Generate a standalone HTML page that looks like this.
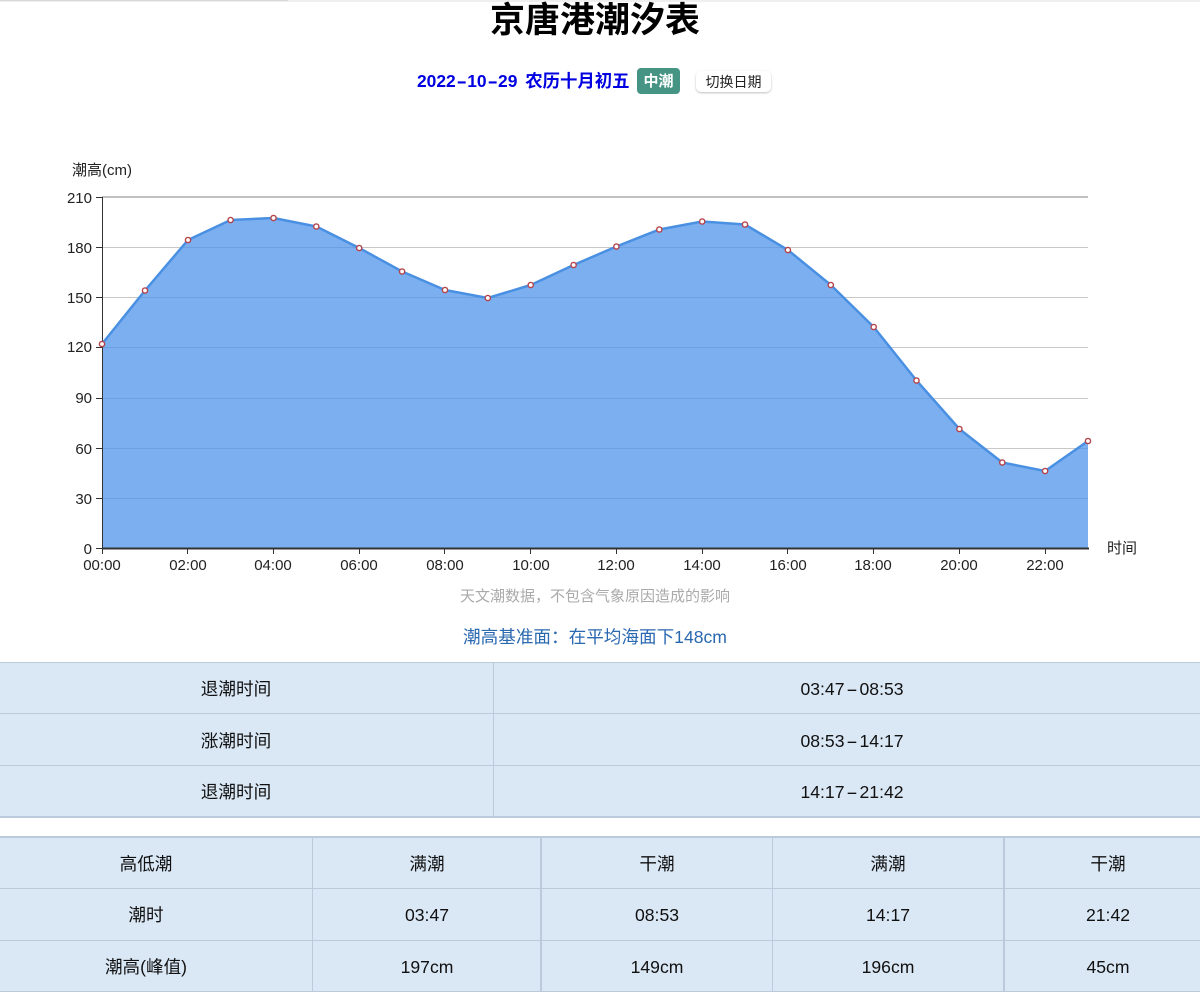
<!DOCTYPE html>
<html lang="zh-CN">
<head>
<meta charset="utf-8">
<title>京唐港潮汐表</title>
<style>
html,body{margin:0;padding:0;background:#fff;width:1200px;height:996px;overflow:hidden;font-family:"Liberation Sans","Noto Sans CJK SC",sans-serif;color:#111}
.abs{position:absolute;white-space:nowrap}
.c{transform:translateX(-50%);text-align:center}
#wrap{position:relative;width:1200px;height:996px;overflow:hidden}
.bg{position:absolute;left:0;width:1200px;background:#dae7f5}
.h{position:absolute;left:0;width:1200px;background:#bccbdc}
.v{position:absolute;background:#bccbdc}
.t{position:absolute;transform:translateX(-50%);white-space:nowrap;font-size:17.6px;line-height:20px;color:#111}
.d{display:inline-block;width:15px;text-align:center;transform:scaleX(2)}
.e{display:inline-block;width:11.5px;text-align:center;transform:scaleX(1.8)}
svg text{font-family:"Liberation Sans","Noto Sans CJK SC",sans-serif}
</style>
</head>
<body>
<div id="wrap">
<div style="position:absolute;left:0;top:0;width:1200px;height:2px;background:#efefef"></div>
<div style="position:absolute;left:0;top:0;width:288px;height:1px;background:#d8d8d8"></div>

<div class="abs c" style="left:595px;top:-1px;font-size:35px;line-height:44px;font-weight:bold;color:#000">京唐港潮汐表</div>
<div class="abs" style="left:417px;top:71px;font-size:17.4px;line-height:21px;font-weight:bold;color:#0000e0;word-spacing:3px">2022<span class="e">-</span>10<span class="e">-</span>29 农历十月初五</div>
<div class="abs" style="left:637px;top:68px;width:43px;height:26px;line-height:27px;border-radius:4px;background:#459484;color:#fff;font-size:15px;font-weight:bold;text-align:center">中潮</div>
<div class="abs" style="left:696px;top:71px;width:75px;height:21px;line-height:22px;border-radius:5px;background:#fff;box-shadow:0 1px 2px rgba(0,0,0,.25);color:#222;font-size:14px;text-align:center">切换日期</div>

<svg style="position:absolute;left:0;top:0" width="1200" height="620" viewBox="0 0 1200 620">
<g stroke="#c8c8c8" stroke-width="1" shape-rendering="crispEdges">
<line x1="102" y1="197" x2="1088" y2="197" stroke="#c0c0c0" stroke-width="2"/>
<line x1="102" y1="247.5" x2="1088" y2="247.5"/>
<line x1="102" y1="297.5" x2="1088" y2="297.5"/>
<line x1="102" y1="347.5" x2="1088" y2="347.5"/>
<line x1="102" y1="398.5" x2="1088" y2="398.5"/>
<line x1="102" y1="448.5" x2="1088" y2="448.5"/>
<line x1="102" y1="498.5" x2="1088" y2="498.5"/>
</g>
<polygon fill="#4a90ea" fill-opacity=".72" points="102,548 102,344 145,290.5 188,240 230.6,220 273.5,218 316.3,226.5 359.2,248 402.1,271.5 445,290 487.8,298 530.7,285 573.6,265 616.4,246.5 659.3,229.5 702.2,221.5 745,224.5 787.9,250 830.8,285 873.7,327 916.5,380.5 959.4,429 1002.3,462.5 1045.1,471 1088,441 1088,548"/>
<polyline fill="none" stroke="#4a90e2" stroke-width="2.5" stroke-linejoin="round" points="102,344 145,290.5 188,240 230.6,220 273.5,218 316.3,226.5 359.2,248 402.1,271.5 445,290 487.8,298 530.7,285 573.6,265 616.4,246.5 659.3,229.5 702.2,221.5 745,224.5 787.9,250 830.8,285 873.7,327 916.5,380.5 959.4,429 1002.3,462.5 1045.1,471 1088,441"/>
<g stroke="#333" stroke-width="1" shape-rendering="crispEdges">
<line x1="102.5" y1="197" x2="102.5" y2="549"/>
<line x1="96" y1="197.5" x2="102" y2="197.5"/>
<line x1="96" y1="247.5" x2="102" y2="247.5"/>
<line x1="96" y1="297.5" x2="102" y2="297.5"/>
<line x1="96" y1="347.5" x2="102" y2="347.5"/>
<line x1="96" y1="398.5" x2="102" y2="398.5"/>
<line x1="96" y1="448.5" x2="102" y2="448.5"/>
<line x1="96" y1="498.5" x2="102" y2="498.5"/>
<line x1="96" y1="548.5" x2="102" y2="548.5"/>
<line x1="102" y1="548.5" x2="1089" y2="548.5" stroke-width="2"/>
<line x1="102.5" y1="549" x2="102.5" y2="554"/>
<line x1="187.5" y1="549" x2="187.5" y2="554"/>
<line x1="273.5" y1="549" x2="273.5" y2="554"/>
<line x1="359.5" y1="549" x2="359.5" y2="554"/>
<line x1="444.5" y1="549" x2="444.5" y2="554"/>
<line x1="530.5" y1="549" x2="530.5" y2="554"/>
<line x1="616.5" y1="549" x2="616.5" y2="554"/>
<line x1="702.5" y1="549" x2="702.5" y2="554"/>
<line x1="787.5" y1="549" x2="787.5" y2="554"/>
<line x1="873.5" y1="549" x2="873.5" y2="554"/>
<line x1="959.5" y1="549" x2="959.5" y2="554"/>
<line x1="1045.5" y1="549" x2="1045.5" y2="554"/>
</g>
<g fill="#fff" stroke="#b5434a" stroke-width="1.4">
<circle cx="102" cy="344" r="2.6"/><circle cx="145" cy="290.5" r="2.6"/><circle cx="188" cy="240" r="2.6"/><circle cx="230.6" cy="220" r="2.6"/><circle cx="273.5" cy="218" r="2.6"/><circle cx="316.3" cy="226.5" r="2.6"/><circle cx="359.2" cy="248" r="2.6"/><circle cx="402.1" cy="271.5" r="2.6"/><circle cx="445" cy="290" r="2.6"/><circle cx="487.8" cy="298" r="2.6"/><circle cx="530.7" cy="285" r="2.6"/><circle cx="573.6" cy="265" r="2.6"/><circle cx="616.4" cy="246.5" r="2.6"/><circle cx="659.3" cy="229.5" r="2.6"/><circle cx="702.2" cy="221.5" r="2.6"/><circle cx="745" cy="224.5" r="2.6"/><circle cx="787.9" cy="250" r="2.6"/><circle cx="830.8" cy="285" r="2.6"/><circle cx="873.7" cy="327" r="2.6"/><circle cx="916.5" cy="380.5" r="2.6"/><circle cx="959.4" cy="429" r="2.6"/><circle cx="1002.3" cy="462.5" r="2.6"/><circle cx="1045.1" cy="471" r="2.6"/><circle cx="1088" cy="441" r="2.6"/>
</g>
<g font-size="15" fill="#222" text-anchor="end">
<text x="92" y="203">210</text><text x="92" y="253">180</text><text x="92" y="303">150</text><text x="92" y="352">120</text><text x="92" y="403">90</text><text x="92" y="454">60</text><text x="92" y="504">30</text><text x="92" y="554">0</text>
</g>
<g font-size="15" fill="#222" text-anchor="middle">
<text x="102" y="570">00:00</text><text x="188" y="570">02:00</text><text x="273" y="570">04:00</text><text x="359" y="570">06:00</text><text x="445" y="570">08:00</text><text x="531" y="570">10:00</text><text x="616" y="570">12:00</text><text x="702" y="570">14:00</text><text x="788" y="570">16:00</text><text x="873" y="570">18:00</text><text x="959" y="570">20:00</text><text x="1045" y="570">22:00</text>
</g>
<text x="72" y="175" font-size="15" fill="#222">潮高(cm)</text>
<text x="1107" y="553" font-size="15" fill="#222">时间</text>
</svg>

<div class="abs c" style="left:595px;top:587px;font-size:15px;line-height:20px;color:#aaa">天文潮数据，不包含气象原因造成的影响</div>
<div class="abs c" style="left:595px;top:627px;font-size:17.6px;line-height:20px;color:#2a68b0">潮高基准面：在平均海面下148cm</div>

<div class="bg" style="top:662px;height:156px"></div>
<div class="h" style="top:662px;height:1px"></div>
<div class="h" style="top:713px;height:1px"></div>
<div class="h" style="top:765px;height:1px"></div>
<div class="h" style="top:816px;height:2px"></div>
<div class="v" style="left:493px;top:662px;width:1px;height:155px"></div>
<div class="t" style="left:236px;top:679px">退潮时间</div><div class="t" style="left:852px;top:679px">03:47<span class="d">-</span>08:53</div>
<div class="t" style="left:236px;top:731px">涨潮时间</div><div class="t" style="left:852px;top:731px">08:53<span class="d">-</span>14:17</div>
<div class="t" style="left:236px;top:782px">退潮时间</div><div class="t" style="left:852px;top:782px">14:17<span class="d">-</span>21:42</div>

<div class="bg" style="top:836px;height:156px"></div>
<div class="h" style="top:836px;height:2px"></div>
<div class="h" style="top:888px;height:1px"></div>
<div class="h" style="top:940px;height:1px"></div>
<div class="h" style="top:991px;height:1px"></div>
<div class="v" style="left:312px;top:837px;width:1px;height:155px"></div>
<div class="v" style="left:540px;top:837px;width:2px;height:155px"></div>
<div class="v" style="left:772px;top:837px;width:1px;height:155px"></div>
<div class="v" style="left:1003px;top:837px;width:2px;height:155px"></div>

<div class="t" style="left:146px;top:854px">高低潮</div><div class="t" style="left:427px;top:854px">满潮</div><div class="t" style="left:657px;top:854px">干潮</div><div class="t" style="left:888px;top:854px">满潮</div><div class="t" style="left:1108px;top:854px">干潮</div>
<div class="t" style="left:146px;top:905px">潮时</div><div class="t" style="left:427px;top:905px">03:47</div><div class="t" style="left:657px;top:905px">08:53</div><div class="t" style="left:888px;top:905px">14:17</div><div class="t" style="left:1108px;top:905px">21:42</div>
<div class="t" style="left:146px;top:957px">潮高(峰值)</div><div class="t" style="left:427px;top:957px">197cm</div><div class="t" style="left:657px;top:957px">149cm</div><div class="t" style="left:888px;top:957px">196cm</div><div class="t" style="left:1108px;top:957px">45cm</div>
</div>
</body>
</html>
